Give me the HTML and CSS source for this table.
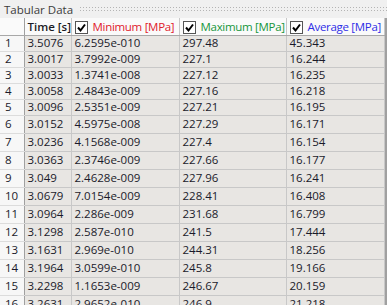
FILE: index.html
```html
<!DOCTYPE html>
<html lang="en">
<head>
  <meta charset="UTF-8" />
  <title>Tabular Data</title>
  <link rel="stylesheet" href="styles.css">
</head>
<body>
  <div class="panel">
    <div class="panel-title">
      <span>Tabular Data</span>
      <div class="grip"></div>
    </div>
    <div class="grid-wrap">
      <table class="grid">
        <colgroup>
          <col class="c-num"><col class="c-time"><col class="c-min"><col class="c-max"><col class="c-avg">
        </colgroup>
        <thead>
          <tr>
            <th class="corner"></th>
            <th class="h-time">Time [s]</th>
            <th><span class="cb"><svg width="13" height="13" viewBox="0 0 13 13"><path d="M3 6.5 L5.5 9.5 L10 3.5" fill="none" stroke="#000" stroke-width="2"/></svg></span><span class="min">Minimum [MPa]</span></th>
            <th><span class="cb"><svg width="13" height="13" viewBox="0 0 13 13"><path d="M3 6.5 L5.5 9.5 L10 3.5" fill="none" stroke="#000" stroke-width="2"/></svg></span><span class="max">Maximum [MPa]</span></th>
            <th><span class="cb"><svg width="13" height="13" viewBox="0 0 13 13"><path d="M3 6.5 L5.5 9.5 L10 3.5" fill="none" stroke="#000" stroke-width="2"/></svg></span><span class="avg">Average [MPa]</span></th>
          </tr>
        </thead>
        <tbody>
          <tr class="short"><td>1</td><td>3.5076</td><td>6.2595e-010</td><td>297.48</td><td>45.343</td></tr>
          <tr class="short"><td>2</td><td>3.0017</td><td>3.7992e-009</td><td>227.1</td><td>16.244</td></tr>
          <tr class="short"><td>3</td><td>3.0033</td><td>1.3741e-008</td><td>227.12</td><td>16.235</td></tr>
          <tr class="short"><td>4</td><td>3.0058</td><td>2.4843e-009</td><td>227.16</td><td>16.218</td></tr>
          <tr class="short"><td>5</td><td>3.0096</td><td>2.5351e-009</td><td>227.21</td><td>16.195</td></tr>
          <tr><td>6</td><td>3.0152</td><td>4.5975e-008</td><td>227.29</td><td>16.171</td></tr>
          <tr><td>7</td><td>3.0236</td><td>4.1568e-009</td><td>227.4</td><td>16.154</td></tr>
          <tr><td>8</td><td>3.0363</td><td>2.3746e-009</td><td>227.66</td><td>16.177</td></tr>
          <tr><td>9</td><td>3.049</td><td>2.4628e-009</td><td>227.96</td><td>16.241</td></tr>
          <tr><td>10</td><td>3.0679</td><td>7.0154e-009</td><td>228.41</td><td>16.408</td></tr>
          <tr><td>11</td><td>3.0964</td><td>2.286e-009</td><td>231.68</td><td>16.799</td></tr>
          <tr><td>12</td><td>3.1298</td><td>2.587e-010</td><td>241.5</td><td>17.444</td></tr>
          <tr><td>13</td><td>3.1631</td><td>2.969e-010</td><td>244.31</td><td>18.256</td></tr>
          <tr><td>14</td><td>3.1964</td><td>3.0599e-010</td><td>245.8</td><td>19.166</td></tr>
          <tr><td>15</td><td>3.2298</td><td>1.1653e-009</td><td>246.67</td><td>20.159</td></tr>
          <tr><td>16</td><td>3.2631</td><td>2.9652e-010</td><td>246.9</td><td>21.218</td></tr>
        </tbody>
      </table>
    </div>
  </div>
</body>
</html>
```

FILE: styles.css
```css
* { margin: 0; padding: 0; box-sizing: border-box; }
html, body { width: 387px; height: 305px; overflow: hidden; }
body {
  background: #f0f0f0;
  font-family: 'Open Sans', 'Liberation Sans', sans-serif;
  font-size: 11.5px;
  color: #1a1a2a;
}
.panel-title {
  display: flex;
  align-items: center;
  height: 18px;
  padding-left: 4px;
  background: #f0f0f0;
  color: #3c3c3c;
  font-size: 11.5px;
}
.grip {
  flex: 1;
  height: 7px;
  margin-left: 6px;
  background-image: radial-gradient(circle, #b4b4b4 0.8px, transparent 1px);
  background-size: 3px 3px;
}
.grid-wrap {
  display: flex;
  border-right: 3px solid #a0a0a0;
}
.grid {
  border-collapse: collapse;
  table-layout: fixed;
  width: 384px;
}
.c-num { width: 24px; }
.c-time { width: 47px; }
.c-min { width: 108px; }
.c-max { width: 107px; }
.c-avg { width: 98px; }
thead tr { height: 17px; }
tbody tr { height: 18px; }
tbody tr.short { height: 16px; }
th {
  background: #fafafa;
  border-right: 1px solid #c8c8c8;
  border-bottom: 1px solid #a8a8a8;
  font-weight: normal;
  text-align: left;
  white-space: nowrap;
  overflow: hidden;
  padding: 0 0 0 3px;
  line-height: 15px;
  font-size: 11.5px;
  letter-spacing: -0.3px;
}
th .cb {
  display: inline-block;
  width: 13px;
  height: 13px;
  border: 1px solid #555;
  background: #fff;
  vertical-align: -3px;
  margin-right: 5px;
}
th .cb svg { display: block; margin: -1px; }
th.corner { border-right: 1px solid #a0a0a0; }
.h-time { color: #1a1a24; font-weight: 600; font-size: 11.5px; letter-spacing: 0; }
.min { color: #e0202c; }
.max { color: #16963a; }
.avg { color: #2e2ee6; }
td {
  padding: 0 0 0 3px;
  background: #e8e6e3;
  border-right: 1px solid #c8c8c8;
  border-bottom: 1px solid #c8c8c8;
  white-space: nowrap;
  line-height: 14px;
}
td:first-child {
  background: #f7f7f7;
  border-right: 1px solid #a0a0a0;
  border-bottom-color: #dcdcdc;
  padding-left: 5px;
}
```
